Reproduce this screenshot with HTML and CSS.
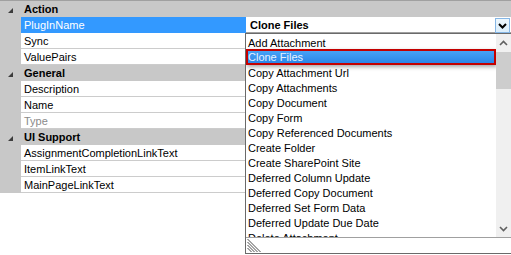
FILE: index.html
```html
<!DOCTYPE html>
<html>
<head>
<meta charset="utf-8">
<link rel="stylesheet" href="styles.css">
</head>
<body>
<div class="grid">
  <div class="topline"></div>
  <div class="cat"><span class="tog"><svg width="6" height="6" viewBox="0 0 6 6"><polygon points="5,0 5,5 0,5" fill="#3c3c3c"/></svg></span><span class="cname">Action</span></div>
  <div class="prop selected"><span class="gut"></span><span class="name">PlugInName</span><span class="val edit"><span class="bold">Clone Files</span><span class="ddbtn"><svg width="9" height="6" viewBox="0 0 9 6"><polyline points="1,1 4.5,4.5 8,1" fill="none" stroke="#000" stroke-width="2"/></svg></span></span></div>
  <div class="prop"><span class="gut"></span><span class="name">Sync</span><span class="val"></span></div>
  <div class="prop"><span class="gut"></span><span class="name">ValuePairs</span><span class="val"></span></div>
  <div class="cat"><span class="tog"><svg width="6" height="6" viewBox="0 0 6 6"><polygon points="5,0 5,5 0,5" fill="#3c3c3c"/></svg></span><span class="cname">General</span></div>
  <div class="prop"><span class="gut"></span><span class="name">Description</span><span class="val"></span></div>
  <div class="prop"><span class="gut"></span><span class="name">Name</span><span class="val"></span></div>
  <div class="prop"><span class="gut"></span><span class="name ro">Type</span><span class="val"></span></div>
  <div class="cat"><span class="tog"><svg width="6" height="6" viewBox="0 0 6 6"><polygon points="5,0 5,5 0,5" fill="#3c3c3c"/></svg></span><span class="cname">UI Support</span></div>
  <div class="prop"><span class="gut"></span><span class="name">AssignmentCompletionLinkText</span><span class="val"></span></div>
  <div class="prop"><span class="gut"></span><span class="name">ItemLinkText</span><span class="val"></span></div>
  <div class="prop"><span class="gut"></span><span class="name">MainPageLinkText</span><span class="val"></span></div>
</div>

<div class="popup">
  <div class="plist">
    <div class="items">
      <div class="item">Add Attachment</div>
      <div class="item sel">Clone Files</div>
      <div class="item">Copy Attachment Url</div>
      <div class="item">Copy Attachments</div>
      <div class="item">Copy Document</div>
      <div class="item">Copy Form</div>
      <div class="item">Copy Referenced Documents</div>
      <div class="item">Create Folder</div>
      <div class="item">Create SharePoint Site</div>
      <div class="item">Deferred Column Update</div>
      <div class="item">Deferred Copy Document</div>
      <div class="item">Deferred Set Form Data</div>
      <div class="item">Deferred Update Due Date</div>
      <div class="item">Delete Attachment</div>
    </div>
    <div class="sbar">
      <div class="sb-btn"><svg width="9" height="6" viewBox="0 0 9 6"><polyline points="1,5 4.5,1.5 8,5" fill="none" stroke="#606060" stroke-width="1.6"/></svg></div>
      <div class="thumb"></div>
      <div class="sb-track"></div>
      <div class="sb-btn"><svg width="9" height="6" viewBox="0 0 9 6"><polyline points="1,1 4.5,4.5 8,1" fill="none" stroke="#606060" stroke-width="1.6"/></svg></div>
    </div>
  </div>
  <div class="gripbar">
    <svg class="grip" width="14" height="13" viewBox="0 0 14 13">
      <g stroke="#4a4a4a" stroke-width="1">
        <line x1="0.5" y1="0" x2="13.5" y2="13"/>
        <line x1="0.5" y1="3" x2="10.5" y2="13"/>
        <line x1="0.5" y1="6" x2="7.5" y2="13"/>
        <line x1="0.5" y1="9" x2="4.5" y2="13"/>
      </g>
    </svg>
  </div>
</div>
</body>
</html>
```
FILE: styles.css
```css
* { box-sizing: border-box; }
html, body {
  margin: 0;
  padding: 0;
  width: 511px;
  height: 255px;
  overflow: hidden;
  background: #ffffff;
  font-family: "Liberation Sans", Arial, sans-serif;
  font-size: 11px;
  color: #000000;
}
.grid {
  width: 511px;
  position: relative;
}
.topline {
  height: 1px;
  background: #a0a0a0;
}
.cat {
  display: flex;
  height: 16px;
  background: #c8c8c8;
}
.tog {
  width: 21px;
  display: flex;
  align-items: flex-start;
  justify-content: flex-start;
  padding: 7px 0 0 8px;
}
.cname {
  font-weight: bold;
  padding: 1px 0 0 3px;
  line-height: 15px;
}
.prop {
  display: flex;
  height: 16px;
}
.gut {
  width: 21px;
  flex: none;
  background: #c8c8c8;
}
.name {
  width: 225px;
  flex: none;
  padding: 1px 0 0 3px;
  line-height: 15px;
  border-bottom: 1px solid #cccccc;
  border-right: 1px solid #cccccc;
  white-space: nowrap;
  overflow: hidden;
}
.name.ro { color: #8a8a8a; }
.val {
  flex: 1;
  border-bottom: 1px solid #cccccc;
}
.selected .name {
  background: #3399ff;
  color: #ffffff;
  border-right-color: #3399ff;
  border-bottom-color: #3399ff;
}
.edit {
  display: flex;
  justify-content: space-between;
  align-items: flex-start;
  padding-left: 4px;
  border-bottom-color: #a0a0a0;
}
.bold {
  font-weight: bold;
  padding-top: 1px;
  line-height: 15px;
}
.ddbtn {
  width: 15px;
  height: 15px;
  margin: 1px 1px 0 0;
  border: 1px solid #86b7e6;
  background: linear-gradient(#eef7fd, #dbeefb);
  display: flex;
  align-items: center;
  justify-content: center;
}
.popup {
  position: absolute;
  left: 245px;
  top: 33px;
  width: 290px;
  height: 221px;
  border: 1px solid #6a6a6a;
  background: #ffffff;
  display: flex;
  flex-direction: column;
}
.plist {
  display: flex;
  height: 203px;
}
.items {
  width: 250px;
  padding-top: 1px;
  overflow: hidden;
  flex: none;
}
.item {
  height: 15px;
  padding: 1px 0 0 2px;
  line-height: 14px;
  white-space: nowrap;
}
.item.sel {
  position: relative;
  height: 16px;
  margin-top: -1px;
  padding: 0;
  line-height: 13px;
  border: 2px solid #c40000;
  background: linear-gradient(#47a2f6, #2b86e8);
  color: #e6f2ff;
  box-shadow: 1px 2px 4px rgba(0, 0, 0, 0.35);
}
.sbar {
  width: 17px;
  flex: none;
  background: #f0f0f0;
  display: flex;
  flex-direction: column;
}
.sb-btn {
  height: 17px;
  display: flex;
  align-items: center;
  justify-content: center;
  padding-right: 2px;
}
.thumb {
  height: 37px;
  margin-top: 1px;
  background: #cdcdcd;
}
.sb-track { flex: 1; }
.gripbar {
  flex: 1;
  border-top: 1px solid #a0a0a0;
  display: flex;
  align-items: flex-end;
  padding: 0 0 1px 1px;
}
.grip { display: block; }
```
